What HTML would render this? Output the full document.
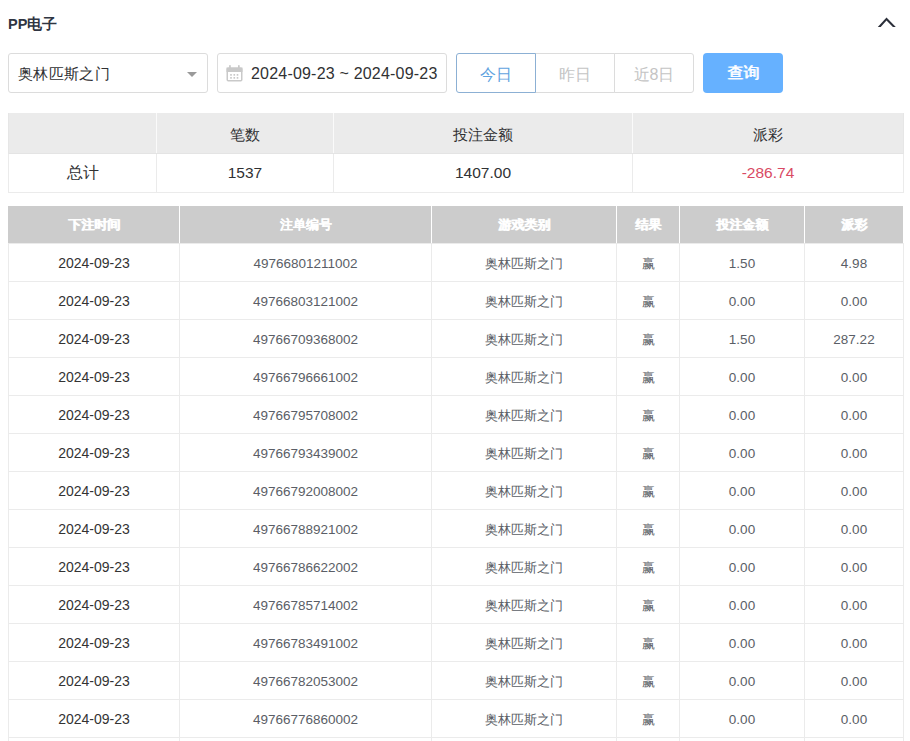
<!DOCTYPE html>
<html><head><meta charset="utf-8"><style>
*{box-sizing:border-box;margin:0;padding:0}
html,body{width:910px;height:741px;overflow:hidden;background:#fff}
body{font-family:"Liberation Sans",sans-serif;font-size:14px;color:#303133;position:relative}
div,span,svg{position:absolute}
.title{left:8px;top:14px;font-size:14.5px;font-weight:bold;color:#2f3542;line-height:20px;white-space:nowrap}
.sel{left:8px;top:53px;width:200px;height:40px;border:1px solid #dcdcdc;border-radius:3px}
.sel span{left:9px;top:1px;line-height:38px;color:#303133;font-size:15px;letter-spacing:0.35px;white-space:nowrap}
.sel i{position:absolute;left:178px;top:18px;width:0;height:0;border-left:5px solid transparent;border-right:5px solid transparent;border-top:5px solid #9a9a9a}
.date{left:217px;top:53px;width:230px;height:40px;border:1px solid #dcdcdc;border-radius:3px}
.date span{left:33px;top:1px;line-height:38px;color:#303133;font-size:16px;letter-spacing:0.2px;white-space:nowrap}
.date svg{left:8px;top:10px}
.rb{top:53px;height:40px;border:1px solid #dcdcdc;text-align:center;line-height:41px;color:#c4c4c4;background:#fff;font-size:16px;white-space:nowrap}
.btn{left:703px;top:53px;width:80px;height:40px;border-radius:4px;background:#66b1ff;color:#fff;text-align:center;line-height:40px;font-size:16px;font-weight:normal;text-shadow:0.6px 0 0 #fff}
.t{text-align:center;white-space:nowrap}
.bg{}
</style></head><body>
<div class="title">PP电子</div>
<svg style="left:876px;top:14px" width="22" height="16" viewBox="0 0 22 16"><path d="M1.8 13 L10.5 3.6 L19.8 13 L16.9 13 L10.5 6.6 L4.7 13 Z" fill="#2b2f3a"/></svg>
<div class="sel"><span>奥林匹斯之门</span><i></i></div>
<div class="date"><svg width="18" height="19" viewBox="0 0 18 19"><rect x="1.25" y="4.25" width="14.5" height="12.5" rx="1" fill="none" stroke="#c9c9c9" stroke-width="1.5"/><rect x="0.5" y="3.5" width="16" height="4.5" fill="#c9c9c9"/><rect x="3.1" y="1" width="1.7" height="3.5" rx="0.8" fill="#c9c9c9"/><rect x="12" y="1" width="1.7" height="3.5" rx="0.8" fill="#c9c9c9"/><path d="M4.2 10.9h1.6M7.5 10.9h1.6M10.7 10.9h1.6M4.2 13.9h1.6M7.5 13.9h1.6M10.7 13.9h1.6" stroke="#c9c9c9" stroke-width="1.6"/></svg><span>2024-09-23 ~ 2024-09-23</span></div>
<div class="rb" style="left:535px;width:80px;border-radius:0">昨日</div>
<div class="rb" style="left:614px;width:80px;border-radius:0 3px 3px 0">近8日</div>
<div class="rb" style="left:456px;width:80px;border-color:#8cb0d4;border-radius:3px 0 0 3px;color:#5fa3e0">今日</div>
<div class="btn">查询</div>
<div style="left:8px;top:113px;width:896px;height:40px;background:#ebebeb"></div>
<div style="left:156px;top:113px;width:1px;height:40px;background:#fafafa"></div>
<div style="left:333px;top:113px;width:1px;height:40px;background:#fafafa"></div>
<div style="left:632px;top:113px;width:1px;height:40px;background:#fafafa"></div>
<div style="left:8px;top:153px;width:896px;height:1px;background:#e4e4e4"></div>
<div style="left:8px;top:192px;width:896px;height:1px;background:#ebebeb"></div>
<div style="left:8px;top:154px;width:1px;height:39px;background:#ebebeb"></div>
<div style="left:156px;top:154px;width:1px;height:39px;background:#ebebeb"></div>
<div style="left:333px;top:154px;width:1px;height:39px;background:#ebebeb"></div>
<div style="left:632px;top:154px;width:1px;height:39px;background:#ebebeb"></div>
<div style="left:903px;top:154px;width:1px;height:39px;background:#ebebeb"></div>
<div style="left:8px;top:113px;width:1px;height:41px;background:#e6e6e6"></div>
<div style="left:903px;top:113px;width:1px;height:41px;background:#e6e6e6"></div>
<div class="t" style="left:9px;top:115px;width:147px;height:39px;line-height:39px;font-size:15px;color:#303133"></div>
<div class="t" style="left:9px;top:154px;width:147px;height:38px;line-height:38px;font-size:15.5px;color:#303133">总计</div>
<div class="t" style="left:157px;top:115px;width:176px;height:39px;line-height:39px;font-size:15px;color:#303133">笔数</div>
<div class="t" style="left:157px;top:154px;width:176px;height:38px;line-height:38px;font-size:15.5px;color:#303133">1537</div>
<div class="t" style="left:334px;top:115px;width:298px;height:39px;line-height:39px;font-size:15px;color:#303133">投注金额</div>
<div class="t" style="left:334px;top:154px;width:298px;height:38px;line-height:38px;font-size:15.5px;color:#303133">1407.00</div>
<div class="t" style="left:633px;top:115px;width:270px;height:39px;line-height:39px;font-size:15px;color:#303133">派彩</div>
<div class="t" style="left:633px;top:154px;width:270px;height:38px;line-height:38px;font-size:15.5px;color:#d94a64">-286.74</div>
<div style="left:8px;top:206px;width:895px;height:37px;background:#cccccc"></div>
<div style="left:179px;top:206px;width:1px;height:37px;background:#ffffff"></div>
<div style="left:431px;top:206px;width:1px;height:37px;background:#ffffff"></div>
<div style="left:616px;top:206px;width:1px;height:37px;background:#ffffff"></div>
<div style="left:679px;top:206px;width:1px;height:37px;background:#ffffff"></div>
<div style="left:804px;top:206px;width:1px;height:37px;background:#ffffff"></div>
<div class="t" style="left:9px;top:206px;width:170px;height:37px;line-height:37px;font-size:13px;font-weight:bold;color:#fff;text-shadow:0.5px 0 0 #fff">下注时间</div>
<div class="t" style="left:180px;top:206px;width:251px;height:37px;line-height:37px;font-size:13px;font-weight:bold;color:#fff;text-shadow:0.5px 0 0 #fff">注单编号</div>
<div class="t" style="left:432px;top:206px;width:184px;height:37px;line-height:37px;font-size:13px;font-weight:bold;color:#fff;text-shadow:0.5px 0 0 #fff">游戏类别</div>
<div class="t" style="left:617px;top:206px;width:62px;height:37px;line-height:37px;font-size:13px;font-weight:bold;color:#fff;text-shadow:0.5px 0 0 #fff">结果</div>
<div class="t" style="left:680px;top:206px;width:124px;height:37px;line-height:37px;font-size:13px;font-weight:bold;color:#fff;text-shadow:0.5px 0 0 #fff">投注金额</div>
<div class="t" style="left:805px;top:206px;width:98px;height:37px;line-height:37px;font-size:13px;font-weight:bold;color:#fff;text-shadow:0.5px 0 0 #fff">派彩</div>
<div style="left:8px;top:243px;width:896px;height:1px;background:#ebebeb"></div>
<div class="t" style="left:9px;top:245px;width:170px;height:37px;line-height:37px;font-size:14px;color:#333">2024-09-23</div>
<div class="t" style="left:180px;top:245px;width:251px;height:37px;line-height:37px;font-size:13.5px;color:#5a5e66">49766801211002</div>
<div class="t" style="left:432px;top:245px;width:184px;height:37px;line-height:37px;font-size:13px;color:#5a5e66">奥林匹斯之门</div>
<div class="t" style="left:617px;top:245px;width:62px;height:37px;line-height:37px;font-size:13px;color:#5a5e66">赢</div>
<div class="t" style="left:680px;top:245px;width:124px;height:37px;line-height:37px;font-size:13.5px;color:#5a5e66">1.50</div>
<div class="t" style="left:805px;top:245px;width:98px;height:37px;line-height:37px;font-size:13.5px;color:#5a5e66">4.98</div>
<div style="left:8px;top:281px;width:896px;height:1px;background:#ebebeb"></div>
<div class="t" style="left:9px;top:283px;width:170px;height:37px;line-height:37px;font-size:14px;color:#333">2024-09-23</div>
<div class="t" style="left:180px;top:283px;width:251px;height:37px;line-height:37px;font-size:13.5px;color:#5a5e66">49766803121002</div>
<div class="t" style="left:432px;top:283px;width:184px;height:37px;line-height:37px;font-size:13px;color:#5a5e66">奥林匹斯之门</div>
<div class="t" style="left:617px;top:283px;width:62px;height:37px;line-height:37px;font-size:13px;color:#5a5e66">赢</div>
<div class="t" style="left:680px;top:283px;width:124px;height:37px;line-height:37px;font-size:13.5px;color:#5a5e66">0.00</div>
<div class="t" style="left:805px;top:283px;width:98px;height:37px;line-height:37px;font-size:13.5px;color:#5a5e66">0.00</div>
<div style="left:8px;top:319px;width:896px;height:1px;background:#ebebeb"></div>
<div class="t" style="left:9px;top:321px;width:170px;height:37px;line-height:37px;font-size:14px;color:#333">2024-09-23</div>
<div class="t" style="left:180px;top:321px;width:251px;height:37px;line-height:37px;font-size:13.5px;color:#5a5e66">49766709368002</div>
<div class="t" style="left:432px;top:321px;width:184px;height:37px;line-height:37px;font-size:13px;color:#5a5e66">奥林匹斯之门</div>
<div class="t" style="left:617px;top:321px;width:62px;height:37px;line-height:37px;font-size:13px;color:#5a5e66">赢</div>
<div class="t" style="left:680px;top:321px;width:124px;height:37px;line-height:37px;font-size:13.5px;color:#5a5e66">1.50</div>
<div class="t" style="left:805px;top:321px;width:98px;height:37px;line-height:37px;font-size:13.5px;color:#5a5e66">287.22</div>
<div style="left:8px;top:357px;width:896px;height:1px;background:#ebebeb"></div>
<div class="t" style="left:9px;top:359px;width:170px;height:37px;line-height:37px;font-size:14px;color:#333">2024-09-23</div>
<div class="t" style="left:180px;top:359px;width:251px;height:37px;line-height:37px;font-size:13.5px;color:#5a5e66">49766796661002</div>
<div class="t" style="left:432px;top:359px;width:184px;height:37px;line-height:37px;font-size:13px;color:#5a5e66">奥林匹斯之门</div>
<div class="t" style="left:617px;top:359px;width:62px;height:37px;line-height:37px;font-size:13px;color:#5a5e66">赢</div>
<div class="t" style="left:680px;top:359px;width:124px;height:37px;line-height:37px;font-size:13.5px;color:#5a5e66">0.00</div>
<div class="t" style="left:805px;top:359px;width:98px;height:37px;line-height:37px;font-size:13.5px;color:#5a5e66">0.00</div>
<div style="left:8px;top:395px;width:896px;height:1px;background:#ebebeb"></div>
<div class="t" style="left:9px;top:397px;width:170px;height:37px;line-height:37px;font-size:14px;color:#333">2024-09-23</div>
<div class="t" style="left:180px;top:397px;width:251px;height:37px;line-height:37px;font-size:13.5px;color:#5a5e66">49766795708002</div>
<div class="t" style="left:432px;top:397px;width:184px;height:37px;line-height:37px;font-size:13px;color:#5a5e66">奥林匹斯之门</div>
<div class="t" style="left:617px;top:397px;width:62px;height:37px;line-height:37px;font-size:13px;color:#5a5e66">赢</div>
<div class="t" style="left:680px;top:397px;width:124px;height:37px;line-height:37px;font-size:13.5px;color:#5a5e66">0.00</div>
<div class="t" style="left:805px;top:397px;width:98px;height:37px;line-height:37px;font-size:13.5px;color:#5a5e66">0.00</div>
<div style="left:8px;top:433px;width:896px;height:1px;background:#ebebeb"></div>
<div class="t" style="left:9px;top:435px;width:170px;height:37px;line-height:37px;font-size:14px;color:#333">2024-09-23</div>
<div class="t" style="left:180px;top:435px;width:251px;height:37px;line-height:37px;font-size:13.5px;color:#5a5e66">49766793439002</div>
<div class="t" style="left:432px;top:435px;width:184px;height:37px;line-height:37px;font-size:13px;color:#5a5e66">奥林匹斯之门</div>
<div class="t" style="left:617px;top:435px;width:62px;height:37px;line-height:37px;font-size:13px;color:#5a5e66">赢</div>
<div class="t" style="left:680px;top:435px;width:124px;height:37px;line-height:37px;font-size:13.5px;color:#5a5e66">0.00</div>
<div class="t" style="left:805px;top:435px;width:98px;height:37px;line-height:37px;font-size:13.5px;color:#5a5e66">0.00</div>
<div style="left:8px;top:471px;width:896px;height:1px;background:#ebebeb"></div>
<div class="t" style="left:9px;top:473px;width:170px;height:37px;line-height:37px;font-size:14px;color:#333">2024-09-23</div>
<div class="t" style="left:180px;top:473px;width:251px;height:37px;line-height:37px;font-size:13.5px;color:#5a5e66">49766792008002</div>
<div class="t" style="left:432px;top:473px;width:184px;height:37px;line-height:37px;font-size:13px;color:#5a5e66">奥林匹斯之门</div>
<div class="t" style="left:617px;top:473px;width:62px;height:37px;line-height:37px;font-size:13px;color:#5a5e66">赢</div>
<div class="t" style="left:680px;top:473px;width:124px;height:37px;line-height:37px;font-size:13.5px;color:#5a5e66">0.00</div>
<div class="t" style="left:805px;top:473px;width:98px;height:37px;line-height:37px;font-size:13.5px;color:#5a5e66">0.00</div>
<div style="left:8px;top:509px;width:896px;height:1px;background:#ebebeb"></div>
<div class="t" style="left:9px;top:511px;width:170px;height:37px;line-height:37px;font-size:14px;color:#333">2024-09-23</div>
<div class="t" style="left:180px;top:511px;width:251px;height:37px;line-height:37px;font-size:13.5px;color:#5a5e66">49766788921002</div>
<div class="t" style="left:432px;top:511px;width:184px;height:37px;line-height:37px;font-size:13px;color:#5a5e66">奥林匹斯之门</div>
<div class="t" style="left:617px;top:511px;width:62px;height:37px;line-height:37px;font-size:13px;color:#5a5e66">赢</div>
<div class="t" style="left:680px;top:511px;width:124px;height:37px;line-height:37px;font-size:13.5px;color:#5a5e66">0.00</div>
<div class="t" style="left:805px;top:511px;width:98px;height:37px;line-height:37px;font-size:13.5px;color:#5a5e66">0.00</div>
<div style="left:8px;top:547px;width:896px;height:1px;background:#ebebeb"></div>
<div class="t" style="left:9px;top:549px;width:170px;height:37px;line-height:37px;font-size:14px;color:#333">2024-09-23</div>
<div class="t" style="left:180px;top:549px;width:251px;height:37px;line-height:37px;font-size:13.5px;color:#5a5e66">49766786622002</div>
<div class="t" style="left:432px;top:549px;width:184px;height:37px;line-height:37px;font-size:13px;color:#5a5e66">奥林匹斯之门</div>
<div class="t" style="left:617px;top:549px;width:62px;height:37px;line-height:37px;font-size:13px;color:#5a5e66">赢</div>
<div class="t" style="left:680px;top:549px;width:124px;height:37px;line-height:37px;font-size:13.5px;color:#5a5e66">0.00</div>
<div class="t" style="left:805px;top:549px;width:98px;height:37px;line-height:37px;font-size:13.5px;color:#5a5e66">0.00</div>
<div style="left:8px;top:585px;width:896px;height:1px;background:#ebebeb"></div>
<div class="t" style="left:9px;top:587px;width:170px;height:37px;line-height:37px;font-size:14px;color:#333">2024-09-23</div>
<div class="t" style="left:180px;top:587px;width:251px;height:37px;line-height:37px;font-size:13.5px;color:#5a5e66">49766785714002</div>
<div class="t" style="left:432px;top:587px;width:184px;height:37px;line-height:37px;font-size:13px;color:#5a5e66">奥林匹斯之门</div>
<div class="t" style="left:617px;top:587px;width:62px;height:37px;line-height:37px;font-size:13px;color:#5a5e66">赢</div>
<div class="t" style="left:680px;top:587px;width:124px;height:37px;line-height:37px;font-size:13.5px;color:#5a5e66">0.00</div>
<div class="t" style="left:805px;top:587px;width:98px;height:37px;line-height:37px;font-size:13.5px;color:#5a5e66">0.00</div>
<div style="left:8px;top:623px;width:896px;height:1px;background:#ebebeb"></div>
<div class="t" style="left:9px;top:625px;width:170px;height:37px;line-height:37px;font-size:14px;color:#333">2024-09-23</div>
<div class="t" style="left:180px;top:625px;width:251px;height:37px;line-height:37px;font-size:13.5px;color:#5a5e66">49766783491002</div>
<div class="t" style="left:432px;top:625px;width:184px;height:37px;line-height:37px;font-size:13px;color:#5a5e66">奥林匹斯之门</div>
<div class="t" style="left:617px;top:625px;width:62px;height:37px;line-height:37px;font-size:13px;color:#5a5e66">赢</div>
<div class="t" style="left:680px;top:625px;width:124px;height:37px;line-height:37px;font-size:13.5px;color:#5a5e66">0.00</div>
<div class="t" style="left:805px;top:625px;width:98px;height:37px;line-height:37px;font-size:13.5px;color:#5a5e66">0.00</div>
<div style="left:8px;top:661px;width:896px;height:1px;background:#ebebeb"></div>
<div class="t" style="left:9px;top:663px;width:170px;height:37px;line-height:37px;font-size:14px;color:#333">2024-09-23</div>
<div class="t" style="left:180px;top:663px;width:251px;height:37px;line-height:37px;font-size:13.5px;color:#5a5e66">49766782053002</div>
<div class="t" style="left:432px;top:663px;width:184px;height:37px;line-height:37px;font-size:13px;color:#5a5e66">奥林匹斯之门</div>
<div class="t" style="left:617px;top:663px;width:62px;height:37px;line-height:37px;font-size:13px;color:#5a5e66">赢</div>
<div class="t" style="left:680px;top:663px;width:124px;height:37px;line-height:37px;font-size:13.5px;color:#5a5e66">0.00</div>
<div class="t" style="left:805px;top:663px;width:98px;height:37px;line-height:37px;font-size:13.5px;color:#5a5e66">0.00</div>
<div style="left:8px;top:699px;width:896px;height:1px;background:#ebebeb"></div>
<div class="t" style="left:9px;top:701px;width:170px;height:37px;line-height:37px;font-size:14px;color:#333">2024-09-23</div>
<div class="t" style="left:180px;top:701px;width:251px;height:37px;line-height:37px;font-size:13.5px;color:#5a5e66">49766776860002</div>
<div class="t" style="left:432px;top:701px;width:184px;height:37px;line-height:37px;font-size:13px;color:#5a5e66">奥林匹斯之门</div>
<div class="t" style="left:617px;top:701px;width:62px;height:37px;line-height:37px;font-size:13px;color:#5a5e66">赢</div>
<div class="t" style="left:680px;top:701px;width:124px;height:37px;line-height:37px;font-size:13.5px;color:#5a5e66">0.00</div>
<div class="t" style="left:805px;top:701px;width:98px;height:37px;line-height:37px;font-size:13.5px;color:#5a5e66">0.00</div>
<div style="left:8px;top:737px;width:896px;height:1px;background:#ebebeb"></div>
<div class="t" style="left:9px;top:739px;width:170px;height:37px;line-height:37px;font-size:14px;color:#333">2024-09-23</div>
<div class="t" style="left:180px;top:739px;width:251px;height:37px;line-height:37px;font-size:13.5px;color:#5a5e66">49766776860002</div>
<div class="t" style="left:432px;top:739px;width:184px;height:37px;line-height:37px;font-size:13px;color:#5a5e66">奥林匹斯之门</div>
<div class="t" style="left:617px;top:739px;width:62px;height:37px;line-height:37px;font-size:13px;color:#5a5e66">赢</div>
<div class="t" style="left:680px;top:739px;width:124px;height:37px;line-height:37px;font-size:13.5px;color:#5a5e66">0.00</div>
<div class="t" style="left:805px;top:739px;width:98px;height:37px;line-height:37px;font-size:13.5px;color:#5a5e66">0.00</div>
<div style="left:8px;top:244px;width:1px;height:497px;background:#ebebeb"></div>
<div style="left:179px;top:244px;width:1px;height:497px;background:#ebebeb"></div>
<div style="left:431px;top:244px;width:1px;height:497px;background:#ebebeb"></div>
<div style="left:616px;top:244px;width:1px;height:497px;background:#ebebeb"></div>
<div style="left:679px;top:244px;width:1px;height:497px;background:#ebebeb"></div>
<div style="left:804px;top:244px;width:1px;height:497px;background:#ebebeb"></div>
<div style="left:903px;top:244px;width:1px;height:497px;background:#ebebeb"></div>
</body></html>
